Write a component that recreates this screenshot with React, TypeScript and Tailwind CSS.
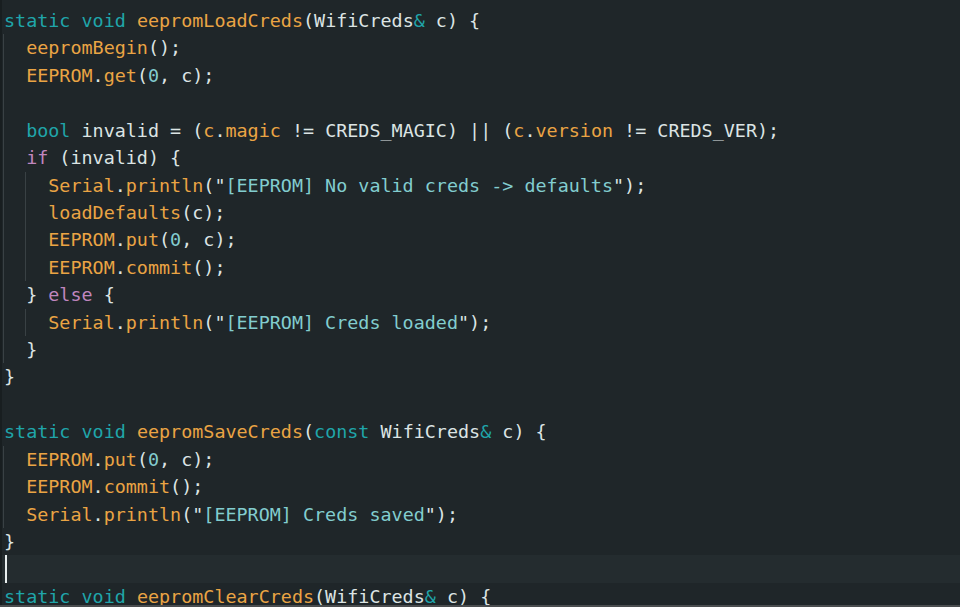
import React from "react";

type Tok = [string, string];

const K = "text-[#1fa5aa]";
const F = "text-[#eaa444]";
const T = "text-[#dce4e4]";
const S = "text-[#82cdcf]";
const P = "text-[#c086bf]";

type Line = { level: number; toks: Tok[]; cursor?: boolean };

const lines: Line[] = [
  { level: 0, toks: [["static", K], [" ", T], ["void", K], [" ", T], ["eepromLoadCreds", F], ["(WifiCreds", T], ["&", K], [" c) {", T]] },
  { level: 1, toks: [["eepromBegin", F], ["();", T]] },
  { level: 1, toks: [["EEPROM", F], [".", T], ["get", F], ["(", T], ["0", S], [", c);", T]] },
  { level: 1, toks: [] },
  {
    level: 1,
    toks: [
      ["bool", K], [" invalid = (", T], ["c", F], [".", T], ["magic", F], [" != CREDS_MAGIC) || (", T],
      ["c", F], [".", T], ["version", F], [" != CREDS_VER);", T],
    ],
  },
  { level: 1, toks: [["if", P], [" (invalid) {", T]] },
  { level: 2, toks: [["Serial", F], [".", T], ["println", F], ["(\"", T], ["[EEPROM] No valid creds -> defaults", S], ["\");", T]] },
  { level: 2, toks: [["loadDefaults", F], ["(c);", T]] },
  { level: 2, toks: [["EEPROM", F], [".", T], ["put", F], ["(", T], ["0", S], [", c);", T]] },
  { level: 2, toks: [["EEPROM", F], [".", T], ["commit", F], ["();", T]] },
  { level: 1, toks: [["} ", T], ["else", P], [" {", T]] },
  { level: 2, toks: [["Serial", F], [".", T], ["println", F], ["(\"", T], ["[EEPROM] Creds loaded", S], ["\");", T]] },
  { level: 1, toks: [["}", T]] },
  { level: 0, toks: [["}", T]] },
  { level: 0, toks: [] },
  { level: 0, toks: [["static", K], [" ", T], ["void", K], [" ", T], ["eepromSaveCreds", F], ["(", T], ["const", K], [" WifiCreds", T], ["&", K], [" c) {", T]] },
  { level: 1, toks: [["EEPROM", F], [".", T], ["put", F], ["(", T], ["0", S], [", c);", T]] },
  { level: 1, toks: [["EEPROM", F], [".", T], ["commit", F], ["();", T]] },
  { level: 1, toks: [["Serial", F], [".", T], ["println", F], ["(\"", T], ["[EEPROM] Creds saved", S], ["\");", T]] },
  { level: 0, toks: [["}", T]] },
  { level: 0, toks: [], cursor: true },
  { level: 0, toks: [["static", K], [" ", T], ["void", K], [" ", T], ["eepromClearCreds", F], ["(WifiCreds", T], ["&", K], [" c) {", T]] },
];

export default function App() {
  return (
    <div
      className="w-[960px] h-[607px] bg-[#1f2629] overflow-hidden flex flex-col"
      style={{ fontFamily: '"DejaVu Sans Mono", "Liberation Mono", monospace' }}
    >
      <div className="flex-1 flex border-l-2 border-[#181e20] pt-[7px] overflow-hidden">
        <div className="flex-1 flex flex-col text-[18.4px] whitespace-pre">
          {lines.map((ln, i) => (
            <div
              key={i}
              className={
                "flex h-[27.43px] leading-[27.43px] shrink-0 pl-[1px] " +
                (ln.cursor ? "bg-[#242c2f]" : "")
              }
            >
              {ln.cursor && <div className="w-[2px] h-full bg-[#e8eeee] ml-[2px]" />}
              {Array.from({ length: ln.level }).map((_, j) => (
                <div key={j} className="w-[2ch] h-full border-l border-[#394144] shrink-0" />
              ))}
              <div className="pl-[1px]">
                {ln.toks.map(([t, c], k) => (
                  <span key={k} className={c}>
                    {t}
                  </span>
                ))}
              </div>
            </div>
          ))}
        </div>
      </div>
      <div className="h-[2px] bg-[#4a4d4f] shrink-0" />
    </div>
  );
}
